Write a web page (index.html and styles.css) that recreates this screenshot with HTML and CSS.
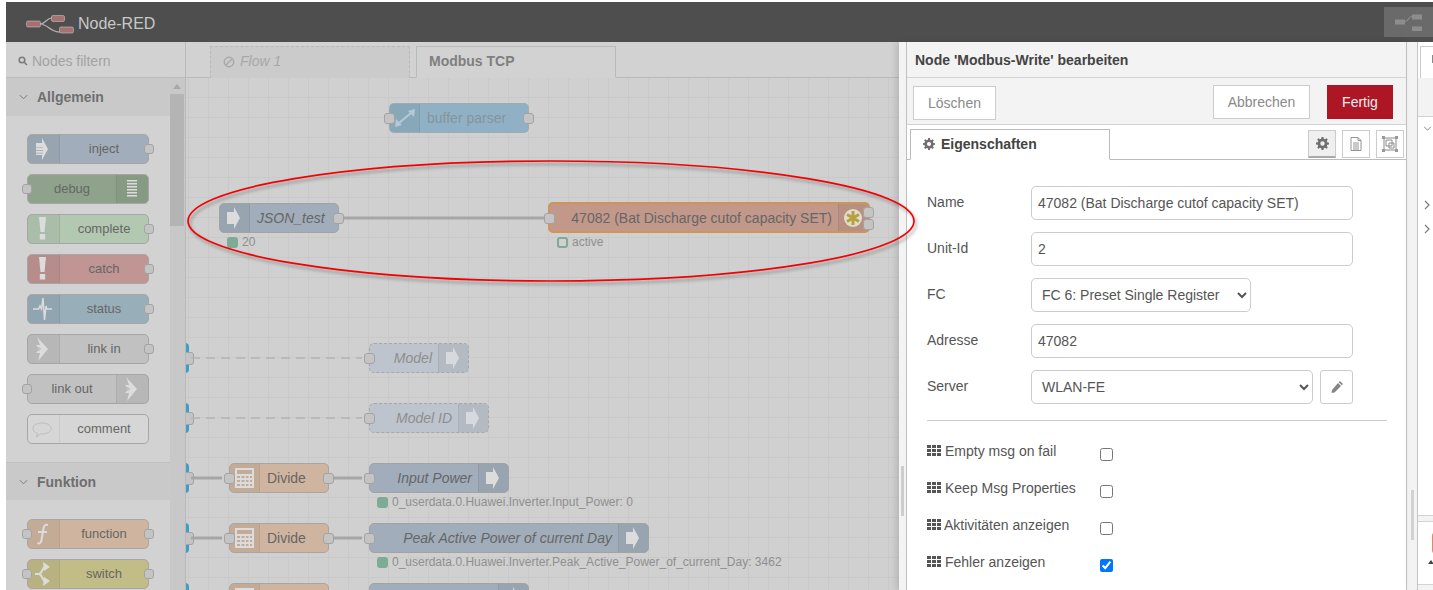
FILE: index.html
```html
<!DOCTYPE html>
<html lang="de">
<head>
<meta charset="utf-8">
<title>Node-RED</title>
<link rel="stylesheet" href="styles.css">
</head>
<body>
<svg class="defs" width="0" height="0" aria-hidden="true">
  <symbol id="i-arrow" viewBox="0 0 32 30"><path d="M8 9h7V4l6 11-6 11v-5H8z"/></symbol>
  <symbol id="i-inject" viewBox="0 0 32 30"><path d="M9 9h6V4l6 11-6 11v-5H9v-1.500h7v-.7H9v-2h7v-.7H9v-2h7v-.7H9z"/></symbol>
  <symbol id="i-debug" viewBox="0 0 32 30"><path d="M11 6h10v1.400H11zM11 9h10v1.400H11zM11 12h10v1.400H11zM11 15h10v1.400H11zM11 18h10v1.400H11zM11 21h10v1.400H11z"/></symbol>
  <symbol id="i-alert" viewBox="0 0 32 30"><path d="M12 3h7l-1.500 15h-4zM12.800 20h5.400v5.500h-5.400z"/></symbol>
  <symbol id="i-pulse" viewBox="0 0 32 30"><path class="st pulse" d="M6 15h5.500l1.500-3 1.500 3 1.500-11 1.500 22 1.500-14 1 3h5"/></symbol>
  <symbol id="i-link" viewBox="0 0 32 30"><path d="M10 3l11 12-10 12 2-8H9l3-4-3-4h4z"/><path class="cut" d="M11 12.500l3.500 2.500-3.500 2.500z"/></symbol>
  <symbol id="i-comment" viewBox="0 0 32 30"><path class="st thin" d="M15 9c5 0 9 2 9 5.500s-4 5.500-9 5.500h-1.500l-4 3 1-3.500c-3-1-4.500-3-4.500-5.500C6 11 10 9 15 9z"/></symbol>
  <symbol id="i-func" viewBox="0 0 32 30"><path class="st" d="M21 6c-3-1-4 1-4.500 3l-2 12c-.5 3-2 4-4 3M11 13h9"/></symbol>
  <symbol id="i-switch" viewBox="0 0 32 30"><path class="st" d="M8 15h4c3 0 3-6 6-7M12 15c3 0 3 6 6 7"/><path d="M16 3l7 5-6 4zM17 18l6 4-7 5z"/></symbol>
  <symbol id="i-calc" viewBox="0 0 32 30"><path fill-rule="evenodd" d="M6 5h19v20H6zM8 7v4h15V7zM8 13v2h3v-2zM12.500 13v2h3v-2zM17 13v2h2.500v-2zM21 13v2h2v-2zM8 17v2h3v-2zM12.500 17v2h3v-2zM17 17v2h2.500v-2zM21 17v2h2v-2zM8 21v2h3v-2zM12.500 21v2h3v-2zM17 21v2h2.500v-2zM21 21v2h2v-2z"/></symbol>
  <symbol id="i-expand" viewBox="0 0 32 30"><path class="st" d="M10 20L22 10"/><path d="M26 6l-1 8-6-6zM6 24l1-8 6 6z"/></symbol>
  <symbol id="i-gear" viewBox="0 0 14 14"><path fill-rule="evenodd" d="M6 0h2l.4 2 1.300.5L11.400 1.400l1.300 1.300-1.100 1.700.5 1.300 1.900.4v1.900l-1.900.4-.5 1.300 1.100 1.700-1.300 1.300-1.700-1.100-1.300.5L8 14H6l-.4-1.900-1.300-.5-1.700 1.100-1.300-1.300 1.100-1.700-.5-1.300L0 8V6l1.900-.4.500-1.300L1.300 2.700l1.300-1.300 1.700 1.100 1.300-.5zM7 4.600a2.400 2.400 0 100 4.800 2.400 2.400 0 000-4.800z"/></symbol>
</svg>

<div class="app">
  <header class="topbar">
    <div class="brand">
      <svg class="logo" viewBox="0 0 48 20">
        <path class="logo-wire" d="M14 9c6 0 6-6 12-6M14 9c8 0 10 8 20 8"/>
        <rect class="logo-box" x="0.500" y="6" width="14" height="6" rx="1.500"/>
        <rect class="logo-box" x="25.500" y="0.500" width="13" height="6" rx="1.500"/>
        <rect class="logo-box" x="33.500" y="12" width="14" height="6" rx="1.500"/>
      </svg>
      <span class="brand-name">Node-RED</span>
    </div>
    <div class="deploy">
      <svg class="deploy-icon" viewBox="0 0 28 16">
        <rect x="0" y="5" width="10" height="5"/><rect x="17" y="0" width="10" height="5"/><rect x="17" y="12" width="10" height="5"/>
        <path class="deploy-wire" d="M10 7c4 0 3-5 7-5"/>
      </svg>
    </div>
  </header>

  <div class="main">
    <aside class="palette">
      <div class="filter">
        <svg class="filter-icon" viewBox="0 0 10 10"><circle cx="4" cy="4" r="2.800"/><path d="M6 6l3 3"/></svg>
        <span>Nodes filtern</span>
      </div>
      <div class="palette-body">
        <div class="palette-list">
          <h3 class="cat"><svg class="chev" viewBox="0 0 10 6"><path d="M1 1l4 4 4-4"/></svg>Allgemein</h3>
          <div class="cat-nodes">
            <div class="pnode c-inject"><div class="ico"><svg><use href="#i-inject"/></svg></div><div class="lbl">inject</div><i class="port pr"></i></div>
            <div class="pnode c-debug"><i class="port pl"></i><div class="lbl">debug</div><div class="ico end"><svg><use href="#i-debug"/></svg></div></div>
            <div class="pnode c-complete"><div class="ico"><svg><use href="#i-alert"/></svg></div><div class="lbl">complete</div><i class="port pr"></i></div>
            <div class="pnode c-catch"><div class="ico"><svg><use href="#i-alert"/></svg></div><div class="lbl">catch</div><i class="port pr"></i></div>
            <div class="pnode c-status"><div class="ico"><svg><use href="#i-pulse"/></svg></div><div class="lbl">status</div><i class="port pr"></i></div>
            <div class="pnode c-link"><div class="ico"><svg><use href="#i-link"/></svg></div><div class="lbl">link in</div><i class="port pr"></i></div>
            <div class="pnode c-link"><i class="port pl"></i><div class="lbl">link out</div><div class="ico end"><svg><use href="#i-link"/></svg></div></div>
            <div class="pnode c-comment"><div class="ico"><svg><use href="#i-comment"/></svg></div><div class="lbl">comment</div></div>
          </div>
          <h3 class="cat cat-2"><svg class="chev" viewBox="0 0 10 6"><path d="M1 1l4 4 4-4"/></svg>Funktion</h3>
          <div class="cat-nodes cat-nodes-2">
            <div class="pnode c-func"><i class="port pl"></i><div class="ico"><svg><use href="#i-func"/></svg></div><div class="lbl">function</div><i class="port pr"></i></div>
            <div class="pnode c-switch"><i class="port pl"></i><div class="ico"><svg><use href="#i-switch"/></svg></div><div class="lbl">switch</div><i class="port pr"></i></div>
          </div>
        </div>
        <div class="pal-scroll"><i class="pal-up"></i><i class="pal-thumb"></i></div>
      </div>
    </aside>

    <section class="workspace">
      <div class="ws-tabs">
        <div class="ws-tab off"><svg class="ban" viewBox="0 0 12 12"><circle cx="6" cy="6" r="4.700"/><path d="M3 9l6-6"/></svg>Flow 1</div>
        <div class="ws-tab on">Modbus TCP</div>
      </div>
      <div class="canvas">
        <i class="edge e1"></i><i class="edge e2"></i><i class="edge e3"></i><i class="edge e4"></i><i class="edge e5"></i>
        <svg class="wires" viewBox="0 0 712 513">
          <path class="w" d="M151 140H360"/>
          <path class="w dash" d="M5 280H176"/>
          <path class="w dash" d="M5 340H176"/>
          <path class="w" d="M5 400H36M146 400H176"/>
          <path class="w" d="M5 460H36M146 460H176"/>
          <path class="w" d="M5 520H36M146 520H176"/>
        </svg>

        <div class="node n-buffer c-buffer dashed"><i class="port pl"></i><div class="ico"><svg><use href="#i-expand"/></svg></div><div class="lbl">buffer parser</div><i class="port pr"></i></div>

        <div class="node n-json c-blue"><div class="ico"><svg><use href="#i-arrow"/></svg></div><div class="lbl it">JSON_test</div><i class="port pr"></i></div>
        <div class="status s-json"><i class="dot"></i>20</div>

        <div class="node n-modbus c-modbus"><i class="port pl"></i><div class="lbl ra">47082 (Bat Discharge cutof capacity SET)</div><div class="ico end"><svg class="star" viewBox="0 0 32 30"><circle class="star-bg" cx="15" cy="15" r="9"/><path class="star-a" d="M15 8v14M9 11.500l12 7M9 18.500l12-7"/></svg></div><i class="port pr p-a"></i><i class="port pr p-b"></i></div>
        <div class="status s-modbus"><i class="dot ring"></i>active</div>

        <div class="node n-model c-blue-off dashed"><i class="port pl"></i><div class="lbl it ra">Model</div><div class="ico end"><svg><use href="#i-arrow"/></svg></div></div>
        <div class="node n-modelid c-blue-off dashed"><i class="port pl"></i><div class="lbl it ra">Model ID</div><div class="ico end"><svg><use href="#i-arrow"/></svg></div></div>

        <div class="node n-d1 c-func"><i class="port pl"></i><div class="ico"><svg><use href="#i-calc"/></svg></div><div class="lbl">Divide</div><i class="port pr"></i></div>
        <div class="node n-input c-blue"><i class="port pl"></i><div class="lbl it ra">Input Power</div><div class="ico end"><svg><use href="#i-arrow"/></svg></div></div>
        <div class="status s-input"><i class="dot"></i>0_userdata.0.Huawei.Inverter.Input_Power: 0</div>

        <div class="node n-d2 c-func"><i class="port pl"></i><div class="ico"><svg><use href="#i-calc"/></svg></div><div class="lbl">Divide</div><i class="port pr"></i></div>
        <div class="node n-peak c-blue"><i class="port pl"></i><div class="lbl it ra">Peak Active Power of current Day</div><div class="ico end"><svg><use href="#i-arrow"/></svg></div></div>
        <div class="status s-peak"><i class="dot"></i>0_userdata.0.Huawei.Inverter.Peak_Active_Power_of_current_Day: 3462</div>

        <div class="node n-d3 c-func"><i class="port pl"></i><div class="ico"><svg><use href="#i-calc"/></svg></div><div class="lbl"></div><i class="port pr"></i></div>
        <div class="node n-last c-blue"><i class="port pl"></i><div class="lbl it ra"></div><div class="ico end"><svg><use href="#i-arrow"/></svg></div></div>
      </div>
    </section>

    <section class="tray-wrap">
      <div class="tray-grip"><i></i></div>
      <div class="tray">
        <div class="tray-title">Node 'Modbus-Write' bearbeiten</div>
        <div class="tray-actions">
          <button class="btn btn-del">Löschen</button>
          <div class="tray-actions-right">
            <button class="btn btn-cancel">Abbrechen</button>
            <button class="btn btn-done">Fertig</button>
          </div>
        </div>
        <div class="tray-tabs">
          <div class="tray-tab"><svg class="gear"><use href="#i-gear"/></svg>Eigenschaften</div>
          <div class="tray-tools">
            <span class="tool active"><svg class="gear"><use href="#i-gear"/></svg></span>
            <span class="tool"><svg class="doc" viewBox="0 0 12 14"><path d="M1 .5h7l3 3v10H1zM8 .5v3h3M3 6h6M3 8h6M3 10h6M3 12h6"/></svg></span>
            <span class="tool"><svg class="frame" viewBox="0 0 16 16"><path d="M2 2h12v12H2z"/><path d="M4 4h6v6H4zM7 7h5v5H7z"/><path class="corner" d="M0 0h3v3H0zM13 0h3v3h-3zM0 13h3v3H0zM13 13h3v3h-3z"/></svg></span>
          </div>
        </div>
        <form class="form">
          <div class="row"><label>Name</label><input class="field wide" type="text" value="47082 (Bat Discharge cutof capacity SET)"></div>
          <div class="row"><label>Unit-Id</label><input class="field wide" type="text" value="2"></div>
          <div class="row"><label>FC</label><select class="field fc"><option>FC 6: Preset Single Register</option></select></div>
          <div class="row"><label>Adresse</label><input class="field wide" type="text" value="47082"></div>
          <div class="row"><label>Server</label><select class="field server"><option>WLAN-FE</option></select>
            <span class="pencil"><svg viewBox="0 0 12 12"><path d="M9 0l3 3-1.300 1.300-3-3zM7 2l3 3-6.500 6.500-3 .5.500-3z"/></svg></span></div>
          <hr class="rule">
          <div class="check"><span class="th"><i></i><i></i><i></i><i></i><i></i><i></i><i></i><i></i><i></i></span><span class="check-label">Empty msg on fail</span><input type="checkbox"></div>
          <div class="check"><span class="th"><i></i><i></i><i></i><i></i><i></i><i></i><i></i><i></i><i></i></span><span class="check-label">Keep Msg Properties</span><input type="checkbox"></div>
          <div class="check"><span class="th"><i></i><i></i><i></i><i></i><i></i><i></i><i></i><i></i><i></i></span><span class="check-label tight">Aktivitäten anzeigen</span><input type="checkbox"></div>
          <div class="check"><span class="th"><i></i><i></i><i></i><i></i><i></i><i></i><i></i><i></i><i></i></span><span class="check-label">Fehler anzeigen</span><input type="checkbox" checked></div>
        </form>
      </div>
    </section>

    <div class="side-grip"><i></i></div>

    <aside class="sidebar">
      <div class="side-tabs"><div class="side-tab"><i class="side-mark"></i></div></div>
      <div class="side-head"></div>
      <div class="side-tree">
        <svg class="tchev first" viewBox="0 0 10 6"><path d="M1 1l4 4 4-4"/></svg>
        <svg class="tchev r r1" viewBox="0 0 6 10"><path d="M1 1l4 4-4 4"/></svg>
        <svg class="tchev r r2" viewBox="0 0 6 10"><path d="M1 1l4 4-4 4"/></svg>
      </div>
      <div class="side-help">
        <i class="help-node"></i>
        <i class="help-mark"></i>
      </div>
      <div class="side-foot"></div>
    </aside>
  </div>

  <svg class="ring-mark" viewBox="0 0 740 134">
    <ellipse class="ring-shadow" cx="365" cy="65" rx="363" ry="60"/>
    <ellipse class="ring-line" cx="363" cy="62" rx="363" ry="60"/>
  </svg>
</div>
</body>
</html>
```

FILE: styles.css
```css
* { box-sizing: border-box; }
html, body { margin: 0; height: 100%; overflow: hidden; background: #fff; }
body { padding: 2px 0 0 6px; font-family: "Liberation Sans", Arial, sans-serif; font-size: 14px; color: #555; --ic: #dcdcdc; }
.defs { position: absolute; }
.app { position: relative; width: 1427px; height: 588px; display: flex; flex-direction: column; overflow: hidden; }

/* top bar */
.topbar { flex: 0 0 40px; background: #4e4e4e; display: flex; justify-content: space-between; align-items: center; }
.brand { display: flex; align-items: center; padding: 4px 0 0 20px; }
.logo { width: 48px; height: 20px; margin: 2px 4px 0 0; }
.logo-wire { fill: none; stroke: #b5b5b5; stroke-width: 1.2; }
.logo-box { fill: #a87171; stroke: #c3c3c3; stroke-width: 0.6; }
.brand-name { font-size: 16px; color: #c8c8c8; }
.deploy { width: 49px; height: 30px; background: #6a6a6a; display: flex; align-items: center; justify-content: center; }
.deploy-icon { width: 28px; height: 17px; }
.deploy-icon rect { fill: #8d8d8d; }
.deploy-wire { fill: none; stroke: #8d8d8d; stroke-width: 1.2; }

.main { flex: 1; display: flex; min-height: 0; }

/* palette */
.palette { flex: 0 0 180px; background: #d2d2d2; border-right: 1px solid #b9b9b9; display: flex; flex-direction: column; }
.filter { height: 36px; display: flex; align-items: center; padding: 2px 0 0 12px; gap: 4px; color: #a2a2a2; border-bottom: 1px solid #bcbcbc; }
.filter-icon { width: 10px; height: 10px; fill: none; stroke: #7b7b7b; stroke-width: 1.6; }
.palette-body { flex: 1; display: flex; min-height: 0; }
.palette-list { flex: 0 0 164px; overflow: hidden; }
.cat { margin: 0; height: 38px; background: #c9c9c9; color: #6f6f6f; font-size: 14px; font-weight: 700; display: flex; align-items: center; padding-left: 13px; gap: 9px; }
.cat-2 { border-top: 1px solid #c0c0c0; margin-top: 0; }
.chev { width: 9px; height: 6px; fill: none; stroke: #7a7a7a; stroke-width: 1.1; }
.cat-nodes { padding: 18px 0 18px 21px; display: flex; flex-direction: column; gap: 10px; }
.cat-nodes-2 { padding-top: 19px; }
.pal-scroll { flex: 0 0 15px; background: #c8c8c8; position: relative; padding: 16px 1px 0 0; }
.pal-up { position: absolute; left: 3px; top: 6px; border: 4px solid transparent; border-top: 0; border-bottom: 5px solid #a8a8a8; }
.pal-thumb { display: block; height: 132px; background: #b4b4b4; }

/* nodes */
.pnode, .node { display: flex; height: 30px; border: 1px solid #a6a6a6; border-radius: 5px; color: #666; }
.pnode { position: relative; width: 122px; font-size: 13px; }
.node { position: absolute; font-size: 14px; }
.ico { flex: 0 0 32px; background: rgba(0,0,0,.05); border-right: 1px solid rgba(0,0,0,.06); border-radius: 4px 0 0 4px; overflow: hidden; }
.node .ico { flex-basis: 30px; }
.ico.end { border-right: 0; border-left: 1px solid rgba(0,0,0,.06); border-radius: 0 4px 4px 0; }
.ico svg { display: block; width: 32px; height: 30px; margin: -1px 0 0 -1px; fill: var(--ic); }
.st { fill: none; stroke: var(--ic); stroke-width: 2; }
.pulse { stroke-width: 1.500; }
.thin { stroke-width: 1; stroke: #bdbdbd; }
.cut { fill: #c1c1c1; }
.lbl { flex: 1; text-align: center; line-height: 28px; white-space: nowrap; min-width: 0; }
.node .lbl { text-align: left; padding: 0 6px 0 7px; }
.node .lbl.ra { text-align: right; }
.it { font-style: italic; }
.port { position: absolute; width: 10px; height: 10px; background: #c4c4c4; border: 1px solid #a3a3a3; border-radius: 3px; top: 9px; }
.node .port { width: 11px; height: 11px; top: 8.500px; }
.pl { left: -6px; }
.pr { right: -6px; }
.dashed { border: 1px dashed #a8a8a8; }

.c-inject { background: #a1adba; }
.c-debug { background: #8fa38c; }
.c-complete { background: #b3c8b1; }
.c-catch { background: #c09593; }
.c-status { background: #98aeb9; }
.c-link { background: #c1c1c1; }
.c-comment { background: #d6d6d6; }
.c-comment .ico { background: none; }
.c-func { background: #cfb59f; }
.c-switch { background: #c2bc87; }
.c-buffer { background: #90b1c5; color: #85949e; --ic: #b3c9d6; }
.c-blue { background: #a1adba; border-color: #a3a3a3; color: #666; }
.c-blue-off { background: #bdc4cd; color: #8e8e8e; --ic: #d6d9dd; }
.c-modbus { background: #c2988a; border: 2px solid #d09458; }
.c-modbus .lbl { line-height: 28px; }
.node.c-modbus .port { top: 9px; }
.node.c-modbus .p-a { top: 3px; }
.node.c-modbus .p-b { top: 15px; }
.star-bg { fill: #e2dbcf; }
.star-a { fill: none; stroke: #b4a23e; stroke-width: 3; }

/* workspace */
.workspace { flex: 0 0 713px; display: flex; flex-direction: column; background: #d0d0d0; }
.ws-tabs { height: 36px; padding: 4px 0 0 24px; display: flex; gap: 6px; border-bottom: 1px solid #bababa; background: #d2d2d2; }
.ws-tab { width: 200px; height: 32px; padding-left: 12px; line-height: 29px; }
.ws-tab.off { border: 1px dashed #b9b9b9; border-bottom: 0; background: #cbcbcb; color: #a8a8a8; font-style: italic; display: flex; align-items: center; gap: 5px; padding-bottom: 2px; }
.ws-tab.on { border: 1px solid #b9b9b9; border-bottom: 1px solid #d2d2d2; background: #d2d2d2; color: #7f7f7f; font-weight: 700; }
.ban { width: 12px; height: 12px; fill: none; stroke: #a8a8a8; stroke-width: 1.5; }
.canvas {
  flex: 1; position: relative; overflow: hidden; background-color: #d0d0d0;
  background-image: linear-gradient(#c9c9c9 1px, transparent 1px), linear-gradient(90deg, #c9c9c9 1px, transparent 1px);
  background-size: 20px 20px; background-position: 2px -1px;
}
.wires { position: absolute; left: 0; top: 0; width: 712px; height: 513px; }
.w { fill: none; stroke: #a6a6a6; stroke-width: 3; }
.w.dash { stroke: #b4b4b4; stroke-width: 1.5; stroke-dasharray: 9 6; }
.edge { position: absolute; left: -15px; width: 18px; height: 30px; background: #3f9dc6; border-radius: 4px; }
.edge::after { content: ""; position: absolute; right: -5px; top: 9px; width: 11px; height: 11px; background: #c4c4c4; border: 1px solid #a3a3a3; border-radius: 3px; }
.e1 { top: 265px; } .e2 { top: 325px; } .e3 { top: 385px; } .e4 { top: 445px; } .e5 { top: 505px; }

.n-buffer { left: 203px; top: 25px; width: 140px; }
.n-json { left: 33px; top: 125px; width: 120px; }
.n-modbus { left: 362px; top: 124px; width: 322px; height: 31px; }
.n-model { left: 183px; top: 265px; width: 100px; }
.n-modelid { left: 183px; top: 325px; width: 120px; }
.n-d1 { left: 43px; top: 385px; width: 100px; }
.n-input { left: 183px; top: 385px; width: 140px; }
.n-d2 { left: 43px; top: 445px; width: 100px; }
.n-peak { left: 183px; top: 445px; width: 280px; }
.n-d3 { left: 43px; top: 505px; width: 100px; }
.n-last { left: 183px; top: 505px; width: 160px; }

.status { position: absolute; display: flex; align-items: center; gap: 4px; height: 12px; font-size: 12px; color: #8f8f8f; white-space: nowrap; }
.dot { display: block; width: 11px; height: 11px; border-radius: 3px; background: #7dab96; }
.dot.ring { background: none; border: 2px solid #7dab96; }
.s-json { left: 41px; top: 158px; }
.s-modbus { left: 371px; top: 158px; }
.s-input { left: 191px; top: 418px; }
.s-peak { left: 191px; top: 478px; }

/* tray */
.tray-wrap { flex: 0 0 507px; display: flex; box-shadow: -3px 0 6px rgba(0,0,0,.12); position: relative; }
.tray-grip { flex: 0 0 7px; background: #f3f3f3; display: flex; align-items: center; }
.tray-grip i { display: block; width: 3px; height: 50px; margin: 350px 0 0 2px; background: #cdcdcd; }
.tray { flex: 1; border: solid #bfbfbf; border-width: 0 1px; background: #fff; display: flex; flex-direction: column; min-width: 0; overflow: hidden; }
.tray > * { flex-shrink: 0; }
.tray-title { height: 36px; background: #f3f3f3; border-bottom: 1px solid #d3d3d3; padding-left: 8px; line-height: 36px; font-weight: 700; font-size: 14px; color: #444; }
.tray-actions { height: 47px; background: #f3f3f3; border-bottom: 1px solid #d3d3d3; display: flex; justify-content: space-between; padding: 7px 13px 0 6px; }
.tray-actions-right { display: flex; gap: 17px; }
.btn { height: 34px; border: 1px solid #ccc; background: #fff; color: #8a8a8a; font: 14px "Liberation Sans", Arial, sans-serif; padding: 0; }
.btn-del { width: 83px; margin-top: 1px; }
.btn-cancel { width: 97px; }
.btn-done { width: 66px; background: #ad1625; border-color: #ad1625; color: #eee; }
.tray-tabs { height: 35px; padding: 4px 2px 0 3px; display: flex; justify-content: space-between; border-bottom: 1px solid #bbb; background: #fff; }
.tray-tab { width: 200px; height: 31px; border: 1px solid #bbb; border-bottom: 1px solid #fff; padding: 0 0 1px 12px; display: flex; align-items: center; gap: 6px; font-weight: 700; color: #444; background: #fff; }
.gear { width: 12px; height: 12px; fill: #6f6f6f; }
.tray-tools { display: flex; gap: 6px; padding-top: 1px; }
.tool { width: 28px; height: 28px; border: 1px solid #ccc; display: flex; align-items: center; justify-content: center; background: #fff; }
.tool.active { background: #efefef; border-bottom: 2px solid #aaa; }
.tool .gear { width: 13px; height: 13px; }
.doc { width: 12px; height: 14px; fill: none; stroke: #888; stroke-width: .9; }
.frame { width: 16px; height: 16px; fill: none; stroke: #8a8a8a; stroke-width: 1; }
.frame .corner { fill: #999; stroke: none; }

.form { padding: 26px 19px 0 20px; display: flex; flex-direction: column; }
.row { display: flex; align-items: flex-start; height: 34px; margin-bottom: 12px; }
.row label { flex: 0 0 104px; line-height: 33px; color: #555; }
.field { height: 34px; border: 1px solid #ccc; border-radius: 5px; background: #fff; color: #555; font: 14px "Liberation Sans", Arial, sans-serif; padding: 0 6px; outline: none; margin: 0; }
.wide { width: 322px; }
.fc { width: 220px; }
.server { width: 282px; padding: 0 6px; }
.pencil { width: 33px; height: 34px; margin-left: 7px; border: 1px solid #ccc; border-radius: 3px; display: flex; align-items: center; justify-content: center; }
.pencil svg { width: 12px; height: 12px; fill: #858585; }
.rule { width: 460px; margin: 4px 0 0; border: 0; border-top: 1px solid #ccc; height: 1px; }
.check { display: flex; align-items: flex-start; height: 37px; }
.rule + .check { margin-top: 22px; }
.th { display: grid; grid-template-columns: repeat(3, 4px); grid-auto-rows: 3px; gap: 1px; width: 14px; margin-top: 2px; margin-right: 4px; }
.th i { display: block; background: #555; }
.check-label { width: 155px; line-height: 16px; }
.check-label.tight { margin-left: -1px; width: 156px; }
.check input { margin: 5px 0 0 0; width: 13px; height: 13px; }

/* right sidebar */
.side-grip { flex: 0 0 10px; background: #f3f3f3; }
.side-grip i { display: block; width: 3px; height: 50px; margin: 448px 0 0 4px; background: #d2d2d2; }
.sidebar { flex: 1; border-left: 1px solid #c5c5c5; background: #fff; display: flex; flex-direction: column; min-width: 0; }
.side-tabs { height: 36px; background: #fff; padding: 4px 0 0 2px; }
.side-tab { height: 32px; border: 1px solid #ccc; border-right: 0; border-bottom: 0; background: #fff; position: relative; }
.side-mark { position: absolute; left: 11px; top: 8px; width: 3px; height: 8px; background: #888; }
.side-head { height: 39px; background: #f3f3f3; border-bottom: 1px solid #d3d3d3; }
.side-tree { height: 398px; position: relative; }
.tchev { position: absolute; fill: none; stroke: #777; stroke-width: 1.1; }
.first { left: 5px; top: 9px; width: 9px; height: 5px; }
.r { left: 6px; width: 6px; height: 10px; }
.r1 { top: 83px; }
.r2 { top: 107px; }
.side-help { height: 69px; border-top: 1px solid #d3d3d3; position: relative; padding-top: 4px; }
.side-help::before { content: ""; display: block; height: 5px; border-bottom: 1px solid #d3d3d3; background: #f3f3f3; margin-top: -4px; }
.help-node { position: absolute; left: 14px; top: 16px; width: 8px; height: 22px; background: #d98b6e; border-radius: 4px 0 0 4px; }
.help-mark { position: absolute; left: 10px; top: 44px; border: 3px solid transparent; border-top: 0; border-bottom: 4px solid #444; }
.side-foot { flex: 1; border-top: 1px solid #d3d3d3; background: #f3f3f3; }

/* annotation drawn on the screenshot */
.ring-mark { position: absolute; left: 182px; top: 157px; width: 740px; height: 134px; pointer-events: none; overflow: visible; }
.ring-line { fill: none; stroke: #f50000; stroke-width: 1.700; }
.ring-shadow { fill: none; stroke: rgba(60,60,60,.3); stroke-width: 2.5; filter: blur(1.5px); }
```
